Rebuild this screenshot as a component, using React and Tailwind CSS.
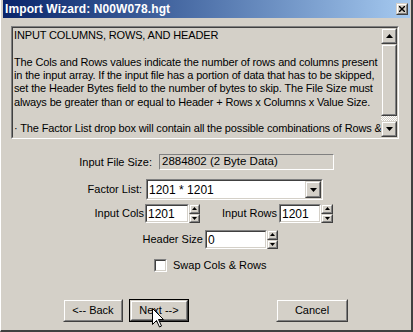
import React from 'react';

const face = "font-['Liberation_Sans',Arial,sans-serif]";

function Sunken({ className = '', innerClass = '', children }) {
  return (
    <div className={`border border-t-[#808080] border-l-[#808080] border-b-white border-r-white ${className}`}>
      <div className={`h-full w-full border border-t-[#404040] border-l-[#404040] border-b-[#d4d0c8] border-r-[#d4d0c8] ${innerClass}`}>
        {children}
      </div>
    </div>
  );
}

function Raised({ className = '', innerClass = '', children }) {
  return (
    <div className={`border border-t-[#d4d0c8] border-l-[#d4d0c8] border-b-[#404040] border-r-[#404040] ${className}`}>
      <div className={`h-full w-full border border-t-white border-l-white border-b-[#808080] border-r-[#808080] bg-[#d4d0c8] flex items-center justify-center ${innerClass}`}>
        {children}
      </div>
    </div>
  );
}

function Tri({ down, size = 7 }) {
  const h = Math.ceil(size / 2);
  return (
    <svg width={size} height={h} viewBox={`0 0 ${size} ${h}`}>
      {down
        ? <polygon points={`0,0 ${size},0 ${size / 2},${h}`} fill="#000" />
        : <polygon points={`0,${h} ${size},${h} ${size / 2},0`} fill="#000" />}
    </svg>
  );
}

function Spin({ className = '' }) {
  return (
    <div className={`flex flex-col h-full ${className}`}>
      <Raised className="flex-1"><Tri size={5} /></Raised>
      <Raised className="flex-1"><Tri down size={5} /></Raised>
    </div>
  );
}

function SpinEdit({ value, editW, spinW }) {
  return (
    <div className="flex h-full">
      <Sunken className="h-full" innerClass="bg-white">
        <div className={`${editW} h-full pl-[1px] flex items-center text-[12px] leading-none`}>{value}</div>
      </Sunken>
      <Spin className={spinW} />
    </div>
  );
}

const lines = [
  'INPUT COLUMNS, ROWS, AND HEADER',
  '',
  'The Cols and Rows values indicate the number of rows and columns present',
  'in the input array. If the input file has a portion of data that has to be skipped,',
  'set the Header Bytes field to the number of bytes to skip. The File Size must',
  'always be greater than or equal to Header + Rows x Columns x Value Size.',
  '',
  '\u00B7 The Factor List drop box will contain all the possible combinations of Rows &',
];

export default function App() {
  return (
    <div className={`w-[413px] h-[332px] bg-[#d4d0c8] relative overflow-hidden flex flex-col text-black ${face} text-[11px]`}>
      <div className="flex flex-1 flex-col border-l border-l-white border-r-2 border-r-[#404040] border-b-2 border-b-[#404040]">
        <div className="ml-[2px] mr-[1px] h-[18px] bg-gradient-to-r from-[#0a246a] to-[#a6caf0] flex items-center justify-between pl-[2px] pr-[2px]">
          <span className="text-white font-bold text-[12px] tracking-[0.1px]">Import Wizard: N00W078.hgt</span>
          <Raised className="w-[12px] h-[12px] mb-[1px]">
            <svg width="6" height="6" viewBox="0 0 6 6"><path d="M0 0L6 6M6 0L0 6" stroke="#000" strokeWidth="1.4" /></svg>
          </Raised>
        </div>

        <div className="pl-[10px] pt-[8px]">
          <Sunken className="w-[388px] h-[113px]" innerClass="flex">
            <div className="flex-1 overflow-hidden pl-[1px] pt-[1px] leading-[13.33px] tracking-[-0.15px]">
              {lines.map((l, i) => (
                <div key={i} className="whitespace-nowrap h-[13.33px]">{l}</div>
              ))}
            </div>
            <div className="w-[16px] flex flex-col h-full">
              <Raised className="h-[16px]"><Tri size={7} /></Raised>
              <Raised className="h-[72px]" />
              <div className="flex-1 bg-[repeating-conic-gradient(#ffffff_0_25%,#d4d0c8_0_50%)] bg-[length:2px_2px]" />
              <Raised className="h-[16px]"><Tri down size={7} /></Raised>
            </div>
          </Sunken>
        </div>

        <div className="mt-[15px] h-[16px] flex items-center">
          <span className="w-[151px] text-right">Input File Size:</span>
          <div className="ml-[7px] w-[175px] h-[16px] border border-t-[#808080] border-l-[#808080] border-b-white border-r-white pl-[2px] flex items-center text-[11.5px]">
            2884802 (2 Byte Data)
          </div>
        </div>

        <div className="mt-[9px] h-[21px] flex items-center">
          <span className="w-[141px] text-right">Factor List:</span>
          <Sunken className="ml-[4px] w-[177px] h-[21px]" innerClass="bg-white flex items-center">
            <span className="flex-1 pl-[1px] text-[12px]">1201 * 1201</span>
            <Raised className="w-[16px] h-[17px]"><Tri down size={7} /></Raised>
          </Sunken>
        </div>

        <div className="mt-[4px] h-[19px] flex items-center">
          <span className="w-[143px] text-right">Input Cols</span>
          <div className="ml-[1px] h-full">
            <SpinEdit value="1201" editW="w-[40px]" spinW="w-[11px]" />
          </div>
          <span className="w-[77px] text-right">Input Rows</span>
          <div className="ml-[2px] h-full">
            <SpinEdit value="1201" editW="w-[38px]" spinW="w-[12px]" />
          </div>
        </div>

        <div className="mt-[7px] h-[19px] flex items-center">
          <span className="w-[202px] text-right">Header Size</span>
          <div className="ml-[2px] h-full">
            <SpinEdit value="0" editW="w-[58px]" spinW="w-[11px]" />
          </div>
        </div>

        <div className="mt-[10px] h-[13px] flex items-center">
          <Sunken className="ml-[153px] w-[13px] h-[13px]" innerClass="bg-white" />
          <span className="ml-[6px]">Swap Cols &amp; Rows</span>
        </div>

        <div className="mt-[27px] h-[23px] flex">
          <Raised className="ml-[62px] w-[60px] h-[23px]">&lt;-- Back</Raised>
          <div className="ml-[6px] w-[60px] h-[23px] border border-black">
            <Raised className="w-full h-full">Next --&gt;</Raised>
          </div>
          <Raised className="ml-[87px] w-[72px] h-[23px]">Cancel</Raised>
        </div>
      </div>

      <svg className="absolute left-[152px] top-[308px]" width="12" height="20" viewBox="0 0 12 20">
        <path d="M0.5 0.5 L0.5 16.5 L4.5 12.5 L7.5 19 L9.5 18 L6.5 11.5 L11.5 11.5 Z" fill="#fff" stroke="#000" strokeWidth="1" />
      </svg>
    </div>
  );
}
